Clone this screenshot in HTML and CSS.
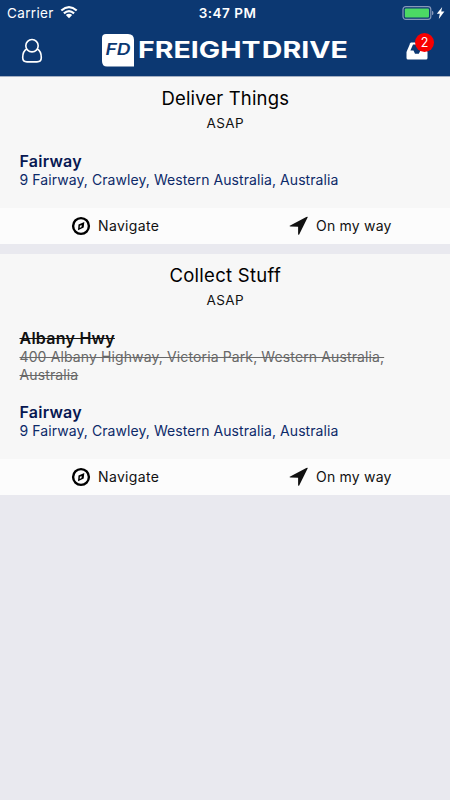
FILE: index.html
```html
<!DOCTYPE html>
<html lang="en">
<head>
<meta charset="utf-8">
<title>Freight Drive</title>
<link rel="stylesheet" href="styles.css">
</head>
<body>
<svg class="symbols" aria-hidden="true">
  <symbol id="compass" viewBox="0 0 20 20"><circle cx="10" cy="10" r="7.9" fill="none" stroke="#000" stroke-width="2.4"/><path d="M13.3 6 12.7 11.6 7 14.2 7.5 8.6Z" fill="#000"/><path d="m10.7 8.9-.2 2.2-1.8.9.2-2.2Z" fill="#fcfcfc"/></symbol>
  <symbol id="arrow" viewBox="0 0 20 20"><path d="M18.6 1.4 10.2 18.4Q9.3 19.5 9.1 18V10.8L1.4 10.6Q-.2 10.2 1.2 9.5L17.3 1Q19.2.1 18.6 1.4Z" fill="#111"/></symbol>
</svg>
<header class="top">
  <div class="status">
    <span class="carrier">Carrier</span>
    <svg class="wifi" viewBox="0 0 18 13"><path d="M1.3 4.5Q9-2.2 16.7 4.5M3.9 7.3Q9 2.9 14.1 7.3" fill="none" stroke="#fff" stroke-width="2.2"/><path d="M5.8 9Q9 6.5 12.2 9L9 12.3Z" fill="#fff"/></svg>
    <span class="time">3:47 PM</span>
    <svg class="battery" viewBox="0 0 44 16"><rect x="1" y="1.6" width="27.8" height="12.8" rx="2.8" fill="none" stroke="#8798b9" stroke-width="1.2"/><rect x="2.8" y="3.4" width="24.2" height="9.2" rx="1" fill="#4cd964"/><path d="M30 5.8Q31.5 6.2 31.5 8T30 10.2Z" fill="#8798b9"/><path d="m40.2 2-5.4 6.8h3L36.8 14l5.6-7.4h-3.2Z" fill="#fff"/></svg>
  </div>
  <div class="nav">
    <svg class="person" viewBox="0 0 22 26"><path d="M6.1 10.7C3.6 12 1.7 15.2 1.7 19.5Q1.7 23.9 6 23.9H16Q20.3 23.9 20.3 19.5C20.3 15.2 18.4 12 15.9 10.7" fill="none" stroke="#fff" stroke-width="1.6"/><circle cx="11" cy="7.7" r="6.2" fill="none" stroke="#fff" stroke-width="1.6"/></svg>
    <svg class="logo" viewBox="0 0 248 34">
      <path d="M5 1H27Q33 1 33 7V33.6H6Q1 33.6 1 28V5Q1 1 5 1Z" fill="#fff"/>
      <text class="mark" x="4.5" y="22.2" textLength="25" lengthAdjust="spacingAndGlyphs">FD</text>
      <text class="word" x="37" y="24.9" textLength="122.5" lengthAdjust="spacingAndGlyphs">FREIGHT</text>
      <text class="word" x="160.8" y="24.9" textLength="86.2" lengthAdjust="spacingAndGlyphs">DRIVE</text>
    </svg>
    <div class="inbox">
      <svg viewBox="0 0 22 18"><path d="M5.2.5H16.8Q17.5.5 17.8 1.2L21.5 10V16Q21.5 17.5 20 17.5H2Q.5 17.5.5 16V10L4.2 1.2Q4.5.5 5.2.5Z" fill="#fff"/><path d="M7 2.5H16L18.5 8.5H14.5L12.8 11.8H9L7.5 8.5H4.4Z" fill="#0c3872"/></svg>
      <span class="badge">2</span>
    </div>
  </div>
</header>
<main>
  <section class="card">
    <div class="body">
      <h2 class="deliver">Deliver Things</h2>
      <p class="when">ASAP</p>
      <div class="stop"><h3>Fairway</h3><p>9 Fairway, Crawley, Western Australia, Australia</p></div>
    </div>
    <div class="actions">
      <div class="action"><svg><use href="#compass"/></svg><span>Navigate</span></div>
      <div class="action"><svg><use href="#arrow"/></svg><span>On my way</span></div>
    </div>
  </section>
  <section class="card">
    <div class="body">
      <h2 class="collect">Collect Stuff</h2>
      <p class="when">ASAP</p>
      <div class="stop done"><h3>Albany Hwy</h3><p>400 Albany Highway, Victoria Park, Western Australia, Australia</p></div>
      <div class="stop"><h3>Fairway</h3><p>9 Fairway, Crawley, Western Australia, Australia</p></div>
    </div>
    <div class="actions">
      <div class="action"><svg><use href="#compass"/></svg><span>Navigate</span></div>
      <div class="action"><svg><use href="#arrow"/></svg><span>On my way</span></div>
    </div>
  </section>
</main>
</body>
</html>
```
FILE: styles.css
```css
* { box-sizing: border-box; }
body { margin: 0; min-height: 800px; background: #e9e9ef; font-family: Inter, "Liberation Sans", sans-serif; color: #111; }
h2, h3, p { margin: 0; }
svg { display: block; flex: none; }
.symbols { position: absolute; width: 0; height: 0; }
.top { height: 77px; background: #0c3872; border-bottom: 1px solid #a4afc2; color: #fff; }
.status { display: grid; grid-template-columns: 53px 1fr auto 1fr 49px; height: 25px; padding: 0 0 0 7px; align-items: center; font-size: 13.5px; }
.carrier { letter-spacing: .35px; line-height: 16px; }
.wifi { width: 18px; height: 13px; }
.time { font-weight: 600; letter-spacing: .5px; line-height: 16px; margin-left: -3px; margin-right: 3px; }
.battery { width: 44px; height: 16px; grid-column: 5; margin-left: 1px; }
.nav { height: 51px; display: flex; justify-content: space-between; padding: 0 16px 0 21px; }
.person { width: 22px; height: 26px; margin-top: 13px; }
.logo { width: 248px; height: 34px; margin: 8px 0 0; }
.mark { font-size: 15.5px; font-weight: 600; font-style: italic; fill: #0c3872; }
.word { font-size: 22.5px; font-weight: 700; fill: #fff; }
.inbox { position: relative; width: 28px; height: 27px; margin-top: 8px; }
.inbox svg { width: 22px; height: 18px; margin: 9px 0 0; }
.badge { position: absolute; right: 0; top: 0; width: 19px; height: 19px; border-radius: 50%; background: #f80000; font-size: 12.5px; line-height: 19px; text-align: center; }
.card { background: #f7f7f7; margin-bottom: 10px; }
.body { padding: 9px 19px 19.5px 19.5px; }
h2 { font-size: 18.5px; line-height: 25px; font-weight: 400; text-align: center; color: #000; }
.deliver { letter-spacing: .15px; }
.collect { letter-spacing: .28px; }
.when { font-size: 13.5px; line-height: 18px; margin-top: 3px; text-align: center; letter-spacing: .35px; }
.stop { margin-top: 19px; color: #0d2a69; }
.stop h3 { font-size: 16px; line-height: 20px; font-weight: 600; color: #071852; letter-spacing: .25px; }
.stop p { font-size: 14px; line-height: 17.5px; letter-spacing: .08px; }
.stop.done { color: #686868; }
.done h3 { color: #111; text-decoration: line-through; }
.done p { text-decoration: line-through; letter-spacing: .12px; }
.actions { display: grid; grid-template-columns: 1fr 1fr; height: 36px; background: #fcfcfc; }
.action { display: flex; align-items: center; padding-left: 71px; gap: 7px; font-size: 14px; letter-spacing: .35px; }
.action span { line-height: 18px; }
.action + .action { padding-left: 64px; letter-spacing: .2px; }
.action svg { width: 20px; height: 20px; }
```
